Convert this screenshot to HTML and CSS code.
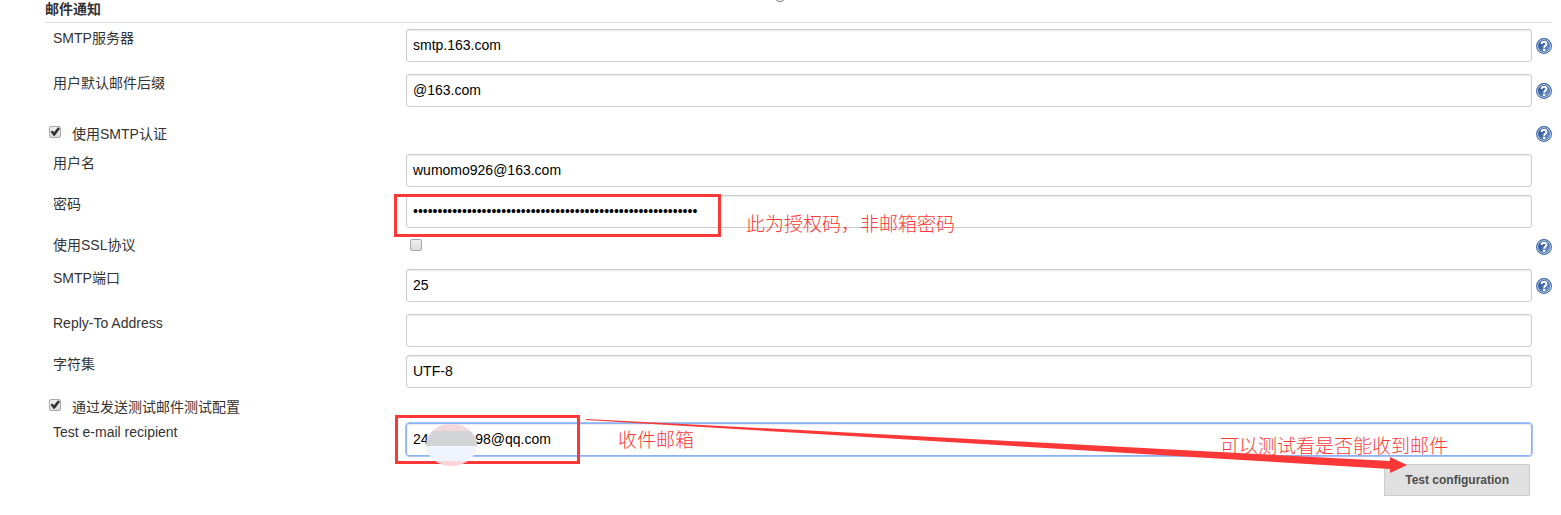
FILE: index.html
```html
<!DOCTYPE html>
<html lang="zh-CN">
<head>
<meta charset="utf-8">
<title>邮件通知</title>
<link rel="stylesheet" href="styles.css">
</head>
<body>
<svg class="symbols" aria-hidden="true">
  <defs>
    <linearGradient id="help-fill" x1="0" y1="0" x2="1" y2="1">
      <stop offset="0" stop-color="#1b4184"/>
      <stop offset="1" stop-color="#7fa6d8"/>
    </linearGradient>
    <symbol id="help" viewBox="0 0 16 16">
      <circle cx="8" cy="8" r="7.4" fill="#fff" stroke="#34619f" stroke-width="1.1"/>
      <circle cx="8" cy="8" r="6" fill="url(#help-fill)" stroke="#34619f" stroke-width=".4"/>
      <path d="M5.5 6C5.7 3 10.5 3 10.4 5.8C10.4 7.5 8.2 7.5 8.2 9.8" fill="none" stroke="#fff" stroke-width="2"/>
      <rect x="7" y="10.8" width="2.2" height="2.2" fill="#fff"/>
    </symbol>
  </defs>
</svg>
<main class="page">
  <span class="ring"></span>
  <form class="settings">
    <h1 class="title">邮件通知</h1>
    <div class="row row-help">
      <label class="label" for="server">SMTP服务器</label>
      <input class="field" id="server" type="text" value="smtp.163.com">
      <button class="help" type="button" aria-label="帮助"><svg class="icon"><use href="#help"/></svg></button>
    </div>
    <div class="row row-help">
      <label class="label" for="suffix">用户默认邮件后缀</label>
      <input class="field" id="suffix" type="text" value="@163.com">
      <button class="help" type="button" aria-label="帮助"><svg class="icon"><use href="#help"/></svg></button>
    </div>
    <div class="check-row check-row-tall">
      <input class="check" id="auth" type="checkbox" checked>
      <label class="check-label" for="auth">使用SMTP认证</label>
      <button class="help" type="button" aria-label="帮助"><svg class="icon"><use href="#help"/></svg></button>
    </div>
    <div class="row">
      <label class="label" for="user">用户名</label>
      <input class="field" id="user" type="text" value="wumomo926@163.com">
    </div>
    <div class="row">
      <label class="label" for="password">密码</label>
      <input class="field" id="password" type="password" value="0000000000000000000000000000000000000000000000000000000000">
      <span class="frame frame-password"></span>
      <span class="note note-password">此为授权码，非邮箱密码</span>
    </div>
    <div class="row row-ssl">
      <label class="label" for="ssl">使用SSL协议</label>
      <input class="check check-ssl" id="ssl" type="checkbox">
      <button class="help" type="button" aria-label="帮助"><svg class="icon"><use href="#help"/></svg></button>
    </div>
    <div class="row row-help">
      <label class="label" for="port">SMTP端口</label>
      <input class="field" id="port" type="text" value="25">
      <button class="help" type="button" aria-label="帮助"><svg class="icon"><use href="#help"/></svg></button>
    </div>
    <div class="row">
      <label class="label" for="reply">Reply-To Address</label>
      <input class="field" id="reply" type="text">
    </div>
    <div class="row">
      <label class="label" for="charset">字符集</label>
      <input class="field" id="charset" type="text" value="UTF-8">
    </div>
    <div class="check-row">
      <input class="check" id="test" type="checkbox" checked>
      <label class="check-label" for="test">通过发送测试邮件测试配置</label>
    </div>
    <div class="row">
      <label class="label" for="recipient">Test e-mail recipient</label>
      <input class="field field-active" id="recipient" type="text" value="24            98@qq.com">
      <span class="frame frame-recipient"></span>
      <span class="smudge"></span>
      <span class="note note-recipient">收件邮箱</span>
      <span class="note note-test">可以测试看是否能收到邮件</span>
      <svg class="arrow" viewBox="0 0 821 56" preserveAspectRatio="none" aria-hidden="true">
        <path d="M0 0L214 11L614 32L804 42V38L821 46L804 54V50L614 38.5L214 14L0 1Z" fill="#fb3838"/>
      </svg>
    </div>
    <div class="actions">
      <button class="submit" type="button">Test configuration</button>
    </div>
  </form>
</main>
</body>
</html>
```
FILE: styles.css
```css
* {
  box-sizing: border-box;
}

body {
  margin: 0;
  background: #fff;
  color: #333;
  font: 14px/18px "Liberation Sans", "Noto Sans CJK SC", sans-serif;
}

.symbols {
  position: absolute;
  width: 0;
  height: 0;
}

.page {
  position: relative;
  overflow: hidden;
  padding: 0 9px 16px 45px;
}

.ring {
  position: absolute;
  top: -10px;
  left: 50%;
  width: 12px;
  height: 12px;
  margin-left: -7px;
  border: 1px solid #777;
  border-radius: 50%;
}

.title {
  height: 23px;
  margin: 0 0 2px;
  border-bottom: 1px solid #ddd;
  font-size: 14px;
  line-height: 18px;
}

.row {
  position: relative;
  display: grid;
  grid-template-columns: 353px minmax(0, 1fr) 20px;
  align-items: start;
  padding: 4px 0 4px 8px;
}

.row-help {
  padding-bottom: 8px;
}

.label {
  line-height: 18px;
}

.field {
  width: 100%;
  height: 33px;
  margin: 0;
  padding: 0 6px 2px;
  border: 1px solid #ccc;
  border-radius: 3px;
  background: #fff;
  box-shadow: inset 0 1px 1px rgba(0, 0, 0, .08);
  color: #000;
  font: inherit;
}

.field-active {
  border-color: #8cb1f5;
  outline: 1px solid #a5c2f7;
  outline-offset: 0;
}

.help {
  align-self: center;
  justify-self: end;
  display: flex;
  padding: 0;
  border: 0;
  background: none;
}

.icon {
  width: 16px;
  height: 16px;
}

.check {
  appearance: none;
  display: grid;
  place-items: center;
  width: 12px;
  height: 12px;
  margin: 0 0 2px;
  border: 1px solid #aaa;
  border-radius: 2px;
  background: linear-gradient(#eee, #dcdcdc);
}

.check:checked::before {
  content: "";
  width: 10px;
  height: 9px;
  background: #333;
  clip-path: polygon(6% 52%, 24% 38%, 40% 58%, 80% 4%, 100% 20%, 48% 96%, 34% 96%);
}

.check-ssl {
  justify-self: start;
  margin: 3px 0 0 4px;
}

.row-ssl {
  min-height: 33px;
  padding-bottom: 7px;
}

.check-row {
  display: grid;
  grid-template-columns: 12px 1fr 20px;
  column-gap: 11px;
  align-items: center;
  min-height: 27px;
  padding-left: 4px;
}

.check-row-tall {
  min-height: 35px;
}

.check-row .help {
  padding-top: 2px;
}

.check-label {
  padding-top: 2px;
}

.actions {
  display: flex;
  justify-content: flex-end;
  padding: 4px 22px 0 0;
}

.submit {
  height: 32px;
  padding: 0 20px;
  border: 1px solid #ccc;
  background: #e0e0e0;
  color: #4d4d4d;
  font: bold 12px/18px "Liberation Sans", sans-serif;
}

.frame {
  position: absolute;
  border: 3px solid #fb3838;
}

.frame-password {
  top: 3px;
  left: 349px;
  width: 327px;
  height: 43px;
}

.frame-recipient {
  top: -4px;
  left: 350px;
  width: 185px;
  height: 49px;
}

.note {
  position: absolute;
  color: #fb3838;
  font: 300 19px/24px "Noto Sans CJK SC", sans-serif;
  white-space: nowrap;
}

.note-password {
  top: 20px;
  left: 701px;
}

.note-recipient {
  top: 8px;
  left: 573px;
}

.note-test {
  top: 14px;
  right: 104px;
}

.smudge {
  position: absolute;
  top: 5px;
  left: 381px;
  width: 51px;
  height: 42px;
  border-radius: 50%;
  background: linear-gradient(#f2d7dc 0 7px, #d2d4d6 7px 22px, #eff4fe 22px 37px, #fbd4d7 37px);
}

.arrow {
  position: absolute;
  top: 0;
  left: 541px;
  width: calc(100% - 686px);
  height: 56px;
}
```
